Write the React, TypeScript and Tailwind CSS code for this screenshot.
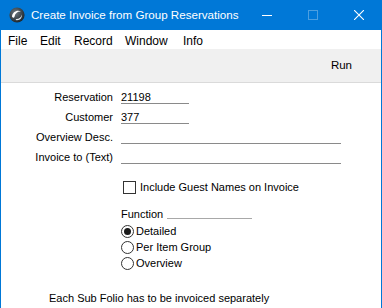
import React from "react";

const font = { fontFamily: '"Liberation Sans", Arial, sans-serif' };

function AppIcon() {
  return (
    <svg width="16" height="16" viewBox="0 0 16 16" className="shrink-0">
      <defs>
        <radialGradient id="g" cx="40%" cy="35%" r="70%">
          <stop offset="0%" stopColor="#6b7780" />
          <stop offset="100%" stopColor="#1b2227" />
        </radialGradient>
      </defs>
      <circle cx="8" cy="8" r="7.6" fill="url(#g)" />
      <path d="M3 9.5 C3.5 5 8 2.5 12 4.5 C9 4 6 6 5.5 9.8 C5.2 11 3.3 11 3 9.5 Z" fill="#fff" />
      <path d="M6.5 12 C9.5 12.5 12.5 10.5 13 7.5 C13.3 10.5 11 13.5 7.5 13.2 Z" fill="#e8eef2" />
    </svg>
  );
}

function Field({ label, value, width }: { label: string; value?: string; width: string }) {
  return (
    <div className="flex h-[20px] items-start">
      <div className="w-[112px] text-right leading-[20px]">{label}</div>
      <div className={`ml-[8px] h-[17px] border-b border-[#8a8a8a] leading-[20px] ${width}`}>
        {value}
      </div>
    </div>
  );
}

function Radio({ label, checked }: { label: string; checked?: boolean }) {
  return (
    <div className="flex h-[16px] items-center leading-[14px]">
      <div className="flex h-[13px] w-[13px] items-center justify-center rounded-full border border-[#333]">
        {checked && <div className="h-[7px] w-[7px] rounded-full bg-[#1a1a1a]" />}
      </div>
      <span className="ml-[2px]">{label}</span>
    </div>
  );
}

export default function App() {
  return (
    <div className="flex h-[308px] w-[382px] flex-col bg-white text-black" style={font}>
      {/* Title bar */}
      <div className="flex h-[30px] items-center bg-[#0078d7] pl-[9px] text-[11.6px] text-white">
        <AppIcon />
        <span className="ml-[6px] min-w-0 flex-1 whitespace-nowrap">
          Create Invoice from Group Reservations
        </span>
        <div className="flex h-full shrink-0">
          <div className="flex w-[46px] items-center justify-center">
            <svg width="10" height="10" viewBox="0 0 10 10">
              <path d="M0 5.5 H10" stroke="#fff" strokeWidth="1" />
            </svg>
          </div>
          <div className="flex w-[46px] items-center justify-center">
            <svg width="10" height="10" viewBox="0 0 10 10">
              <rect x="0.5" y="0.5" width="9" height="9" fill="none" stroke="#4c9fe0" strokeWidth="1" />
            </svg>
          </div>
          <div className="flex w-[46px] items-center justify-center">
            <svg width="10" height="10" viewBox="0 0 10 10">
              <path d="M0 0 L10 10 M10 0 L0 10" stroke="#fff" strokeWidth="1.1" />
            </svg>
          </div>
        </div>
      </div>

      <div className="flex flex-1 flex-col border-x border-[#0078d7] text-[11px]">
        {/* Menu */}
        <div className="flex h-[19px] items-center pl-[7px] pt-[2px] text-[12px]">
          <span className="w-[32px]">File</span>
          <span className="w-[34px]">Edit</span>
          <span className="w-[51px]">Record</span>
          <span className="w-[58px]">Window</span>
          <span>Info</span>
        </div>

        {/* Toolbar */}
        <div className="flex h-[34px] items-center justify-end border-b border-[#dadada] bg-[#f0f0f0] pr-[29px] text-[11.5px]">
          Run
        </div>

        {/* Form */}
        <div className="mt-[4px] flex flex-col">
          <Field label="Reservation" value="21198" width="w-[68px]" />
          <Field label="Customer" value="377" width="w-[68px]" />
          <Field label="Overview Desc." width="w-[220px]" />
          <Field label="Invoice to (Text)" width="w-[220px]" />
        </div>

        <div className="mt-[14px] flex h-[13px] items-center pl-[122px] leading-[13px]">
          <div className="h-[13px] w-[13px] border border-[#333]" />
          <span className="ml-[4px]">Include Guest Names on Invoice</span>
        </div>

        <div className="mt-[13px] flex items-start pl-[120px]">
          <span className="leading-[14px]">Function</span>
          <div className="ml-[4px] mt-[11px] h-px w-[85px] bg-[#a8a8a8]" />
        </div>

        <div className="mt-[2px] flex flex-col pl-[120px]">
          <Radio label="Detailed" checked />
          <Radio label="Per Item Group" />
          <Radio label="Overview" />
        </div>

        <div className="mt-[20px] pl-[48px] leading-[14px]">
          Each Sub Folio has to be invoiced separately
        </div>
      </div>
    </div>
  );
}
